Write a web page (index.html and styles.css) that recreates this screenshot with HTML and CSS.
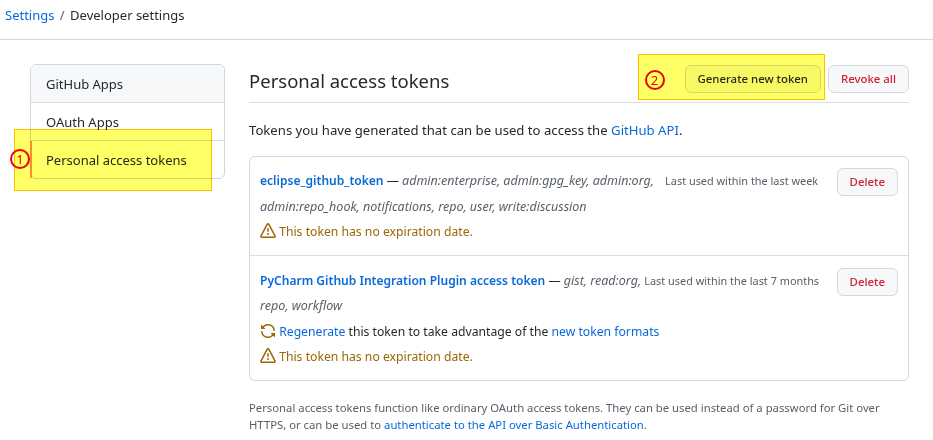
FILE: index.html
```html
<!DOCTYPE html>
<html lang="en">
<head>
    <meta charset="UTF-8">
    <meta name="viewport" content="width=device-width, initial-scale=1.0">
    <title>Personal access tokens</title>
    <link rel="stylesheet" href="styles.css">
</head>
<body>
    <svg class="icon-defs" width="0" height="0" aria-hidden="true">
        <symbol id="icon-alert" viewBox="0 0 16 16">
            <path d="M8.22 1.754a.25.25 0 0 0-.44 0L1.698 13.132a.25.25 0 0 0 .22.368h12.164a.25.25 0 0 0 .22-.368L8.22 1.754zm-1.763-.707c.659-1.234 2.427-1.234 3.086 0l6.082 11.378A1.75 1.75 0 0 1 14.082 15H1.918a1.75 1.75 0 0 1-1.543-2.575L6.457 1.047zM9 11a1 1 0 1 1-2 0 1 1 0 0 1 2 0zm-.25-5.25a.75.75 0 0 0-1.5 0v2.5a.75.75 0 0 0 1.5 0v-2.5z"/>
        </symbol>
        <symbol id="icon-sync" viewBox="0 0 16 16">
            <path d="M8 2.5a5.487 5.487 0 0 0-4.131 1.869l1.204 1.204A.25.25 0 0 1 4.896 6H1.25A.25.25 0 0 1 1 5.75V2.104a.25.25 0 0 1 .427-.177l1.38 1.38A7.001 7.001 0 0 1 14.95 7.16a.75.75 0 1 1-1.49.178A5.501 5.501 0 0 0 8 2.5zM1.705 8.005a.75.75 0 0 1 .834.656 5.501 5.501 0 0 0 9.592 2.97l-1.204-1.204a.25.25 0 0 1 .177-.427h3.646a.25.25 0 0 1 .25.25v3.646a.25.25 0 0 1-.427.177l-1.38-1.38A7.001 7.001 0 0 1 1.05 8.84a.75.75 0 0 1 .656-.834z"/>
        </symbol>
    </svg>

    <nav class="breadcrumb">
        <a href="#">Settings</a>
        <span class="crumb-sep">/</span>
        <span>Developer settings</span>
    </nav>

    <div class="layout">
        <aside class="sidebar">
            <ul class="side-menu">
                <li class="side-item side-first">GitHub Apps</li>
                <li class="side-item">OAuth Apps</li>
                <li class="side-item side-current">Personal access tokens</li>
            </ul>
            <div class="mark mark-side"><span class="mark-num">1</span></div>
        </aside>

        <main class="content">
            <header class="page-head">
                <h2>Personal access tokens</h2>
                <div class="head-actions">
                    <button class="btn">Generate new token</button>
                    <button class="btn btn-danger">Revoke all</button>
                    <div class="mark mark-head"><span class="mark-num">2</span></div>
                </div>
            </header>

            <p class="intro">Tokens you have generated that can be used to access the <a href="#">GitHub API</a>.</p>

            <div class="token-box">
                <div class="token-row">
                    <button class="btn btn-danger btn-delete">Delete</button>
                    <div class="token-line">
                        <a href="#" class="token-name">eclipse_github_token</a> — <em>admin:enterprise, admin:gpg_key, admin:org,</em>
                        <span class="last-used last-used-wide">Last used within the last week</span>
                    </div>
                    <div class="token-line"><em>admin:repo_hook, notifications, repo, user, write:discussion</em></div>
                    <div class="token-line warn">
                        <svg class="icon"><use href="#icon-alert"/></svg>
                        This token has no expiration date.
                    </div>
                </div>
                <div class="token-row">
                    <button class="btn btn-danger btn-delete">Delete</button>
                    <div class="token-line">
                        <a href="#" class="token-name">PyCharm Github Integration Plugin access token</a> — <em>gist, read:org,</em>
                        <span class="last-used">Last used within the last 7 months</span>
                    </div>
                    <div class="token-line"><em>repo, workflow</em></div>
                    <div class="token-line">
                        <svg class="icon icon-warn"><use href="#icon-sync"/></svg>
                        <a href="#">Regenerate</a> this token to take advantage of the <a href="#">new token formats</a>
                    </div>
                    <div class="token-line warn">
                        <svg class="icon"><use href="#icon-alert"/></svg>
                        This token has no expiration date.
                    </div>
                </div>
            </div>

            <p class="note">Personal access tokens function like ordinary OAuth access tokens. They can be used instead of a password for Git over HTTPS, or can be used to <a href="#">authenticate to the API over Basic Authentication</a>.</p>
        </main>
    </div>
</body>
</html>
```

FILE: styles.css
```css
/* Global Styles */
body {
    font-family: "Noto Sans", "Liberation Sans", sans-serif;
    font-size: 13px;
    color: #24292f;
    background: #ffffff;
    margin: 0;
    height: 440px;
    overflow: hidden;
}

a {
    color: #0969da;
    text-decoration: none;
}

.icon-defs {
    display: block;
    height: 0;
}

/* Breadcrumb */
.breadcrumb {
    height: 29px;
    padding: 5px 0 5px 5px;
    border-bottom: 1px solid #d0d7de;
    line-height: 20px;
}

.crumb-sep {
    color: #57606a;
    margin: 0 2px;
}

/* Layout */
.layout {
    display: flex;
    padding: 24px 24px 0 30px;
    gap: 24px;
}

.sidebar {
    position: relative;
    width: 195px;
    flex: none;
}

.side-menu {
    list-style: none;
    margin: 0;
    padding: 0;
    border: 1px solid #d0d7de;
    border-radius: 6px;
}

.side-item {
    height: 37px;
    padding-left: 15px;
    line-height: 39px;
    border-top: 1px solid #d8dee4;
}

.side-first {
    border-top: none;
    border-radius: 5px 5px 0 0;
    background: #f6f8fa;
}

.side-current {
    margin-left: -1px;
    padding-left: 16px;
    box-shadow: inset 2px 0 0 #fd8c73;
}

/* Annotations */
.mark {
    position: absolute;
    box-sizing: border-box;
    background: #ffff66;
    border: 1px solid #ffc000;
    mix-blend-mode: multiply;
}

.mark-num {
    position: absolute;
    box-sizing: border-box;
    width: 20px;
    height: 20px;
    border: 2px solid #f00000;
    border-radius: 50%;
    color: #f00000;
    font-size: 13px;
    line-height: 16px;
    text-align: center;
}

.mark-side {
    left: -16px;
    top: 65px;
    width: 198px;
    height: 62px;
}

.mark-side .mark-num {
    left: -5px;
    top: 19px;
}

.mark-head {
    left: -47px;
    top: -11px;
    width: 187px;
    height: 46px;
}

.mark-head .mark-num {
    left: 6px;
    top: 15px;
}

/* Main content */
.content {
    flex: 1;
    min-width: 0;
}

.page-head {
    display: flex;
    align-items: flex-start;
    justify-content: space-between;
    height: 38px;
    border-bottom: 1px solid #d8dee4;
}

.page-head h2 {
    font-size: 18.5px;
    font-weight: 400;
    line-height: 34px;
    margin: 0;
}

.head-actions {
    position: relative;
    display: flex;
    gap: 7px;
    margin-top: 1px;
}

.btn {
    font-family: inherit;
    font-size: 11.4px;
    font-weight: 500;
    line-height: 20px;
    height: 28px;
    padding: 0 12px;
    color: #24292f;
    background: #f6f8fa;
    border: 1px solid #d5d9de;
    border-radius: 6px;
}

.btn-danger {
    color: #cf222e;
}

.intro {
    margin: 17px 0 16px;
    font-size: 13.15px;
    line-height: 20px;
}

/* Token list */
.token-box {
    border: 1px solid #d0d7de;
    border-radius: 6px;
}

.token-row {
    padding: 11px 10px 10px;
}

.token-row + .token-row {
    padding-top: 12px;
    border-top: 1px solid #d8dee4;
}

.btn-delete {
    float: right;
}

.token-line {
    font-size: 12.2px;
    line-height: 25.5px;
    white-space: nowrap;
}

.token-line em {
    color: #57606a;
    font-size: 12.5px;
}

.token-name {
    font-weight: 600;
    font-size: 12.05px;
}

.last-used {
    font-size: 10.9px;
    color: #57606a;
}

.last-used-wide {
    margin-left: 8px;
}

.warn {
    color: #9a6700;
}

.icon {
    width: 16px;
    height: 16px;
    fill: currentColor;
    vertical-align: -3px;
}

.icon-warn {
    color: #9a6700;
}

/* Footnote */
.note {
    margin: 18px 0 0;
    font-size: 11.3px;
    line-height: 17px;
    color: #57606a;
}
```
